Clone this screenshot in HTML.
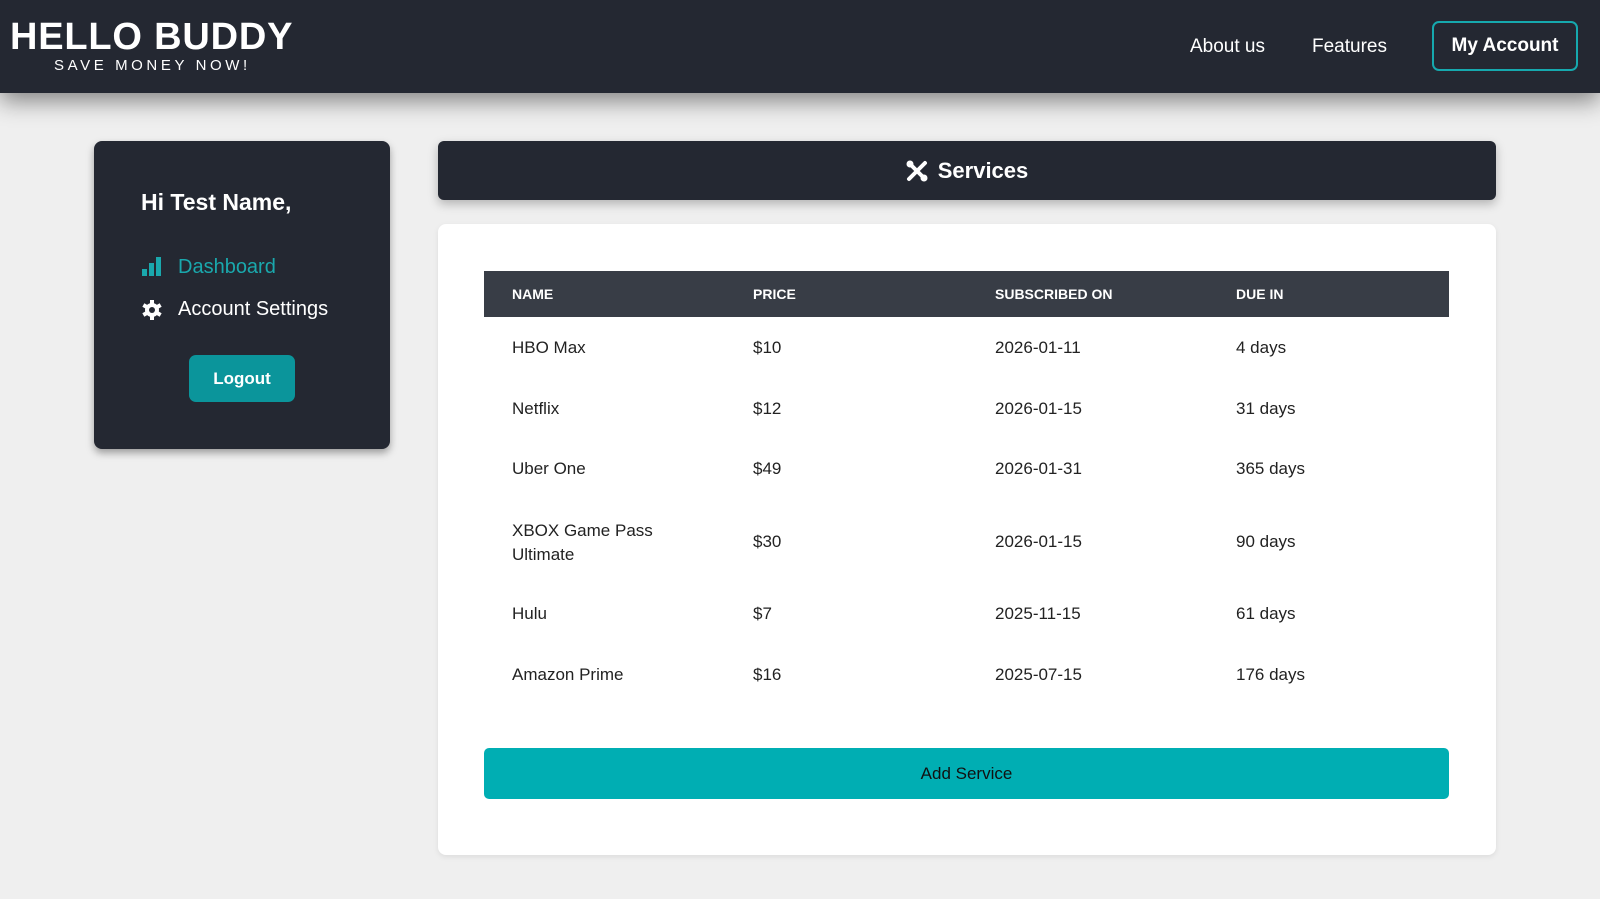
<!DOCTYPE html>
<html><head><meta charset="utf-8"><style>
*{box-sizing:border-box;margin:0;padding:0}
body{width:1600px;height:899px;overflow:hidden;background:#efefef;font-family:"Liberation Sans",sans-serif;position:relative}
.hdr{position:absolute;left:0;top:0;width:1600px;height:93px;background:#242832;box-shadow:0 8px 22px rgba(0,0,0,.45)}
.logo{position:absolute;left:10px;top:15px;color:#fff;font-weight:bold;font-size:38px;letter-spacing:0.8px;line-height:44px}
.tag{position:absolute;left:54px;top:57px;color:#fff;font-size:15px;letter-spacing:3.6px}
.nav{position:absolute;top:36px;color:#fff;font-size:19px}
.acct{position:absolute;left:1432px;top:21px;width:146px;height:50px;border:2px solid #16a9ae;border-radius:7px;color:#fff;font-weight:bold;font-size:19px;text-align:center;line-height:46px}
.side{position:absolute;left:94px;top:141px;width:296px;height:308px;background:#242832;border-radius:8px;box-shadow:0 4px 8px rgba(0,0,0,.35);color:#fff}
.side h2{position:absolute;left:47px;top:48px;font-size:23px;font-weight:bold}
.side .it{position:absolute;left:84px;font-size:20px}
.logout{position:absolute;left:95px;top:214px;width:106px;height:47px;background:#0b959b;border-radius:7px;text-align:center;line-height:47px;font-size:17px;font-weight:bold}
.sh{position:absolute;left:438px;top:141px;width:1058px;height:59px;background:#242832;border-radius:6px;box-shadow:0 4px 10px rgba(0,0,0,.25);color:#fff;font-size:22px;font-weight:bold;text-align:center;line-height:59px}
.card{position:absolute;left:438px;top:224px;width:1058px;height:631px;background:#fff;border-radius:8px;box-shadow:0 2px 6px rgba(0,0,0,.08)}
.th{position:absolute;left:46px;top:47px;width:965px;height:46px;background:#383d46;color:#fff;font-size:14px;font-weight:bold}
.th span,.r span{position:absolute}
.th span{top:15px}
.r{position:absolute;left:46px;width:965px;font-size:17px;color:#222}
.add{position:absolute;left:46px;top:524px;width:965px;height:51px;background:#00aeb3;border-radius:5px;text-align:center;line-height:51px;font-size:17px;color:#111}
</style></head><body>
<div class="hdr">
<div class="logo">HELLO BUDDY</div>
<div class="tag">SAVE MONEY NOW!</div>
<div class="nav" style="left:1190px">About us</div>
<div class="nav" style="left:1312px">Features</div>
<div class="acct">My Account</div>
</div>
<div class="side">
<h2>Hi Test Name,</h2>
<svg style="position:absolute;left:48px;top:116px" width="20" height="19"><rect x="0" y="12" width="5" height="7" fill="#1aa8ad"/><rect x="7" y="6" width="5" height="13" fill="#1aa8ad"/><rect x="14" y="0" width="5" height="19" fill="#1aa8ad"/></svg>
<div class="it" style="top:115px;color:#1aa8ad">Dashboard</div>
<svg style="position:absolute;left:48px;top:159px" width="20" height="20" viewBox="0 0 20 20"><circle cx="10" cy="10" r="7" fill="#fff"/><g fill="#fff"><rect x="8" y="0" width="4" height="20"/><rect x="8" y="0" width="4" height="20" transform="rotate(60 10 10)"/><rect x="8" y="0" width="4" height="20" transform="rotate(120 10 10)"/></g><circle cx="10" cy="10" r="3" fill="#242832"/></svg>
<div class="it" style="top:157px">Account Settings</div>
<div class="logout">Logout</div>
</div>
<div class="sh"><svg style="vertical-align:-4px;margin-right:10px" width="22" height="22" viewBox="0 0 22 22"><path d="M3 3l16 16M19 3L3 19" stroke="#fff" stroke-width="4" stroke-linecap="round"/><circle cx="4" cy="4" r="3.5" fill="#fff"/><circle cx="18" cy="18" r="3.5" fill="#fff"/></svg>Services</div>
<div class="card">
<div class="th"><span style="left:28px">NAME</span><span style="left:269px">PRICE</span><span style="left:511px">SUBSCRIBED ON</span><span style="left:752px">DUE IN</span></div>
<div class="r" style="top:114px"><span style="left:28px">HBO Max</span><span style="left:269px">$10</span><span style="left:511px">2026-01-11</span><span style="left:752px">4 days</span></div>
<div class="r" style="top:175px"><span style="left:28px">Netflix</span><span style="left:269px">$12</span><span style="left:511px">2026-01-15</span><span style="left:752px">31 days</span></div>
<div class="r" style="top:235px"><span style="left:28px">Uber One</span><span style="left:269px">$49</span><span style="left:511px">2026-01-31</span><span style="left:752px">365 days</span></div>
<div class="r" style="top:295px"><span style="left:28px;line-height:24px">XBOX Game Pass<br>Ultimate</span><span style="left:269px;top:13px">$30</span><span style="left:511px;top:13px">2026-01-15</span><span style="left:752px;top:13px">90 days</span></div>
<div class="r" style="top:380px"><span style="left:28px">Hulu</span><span style="left:269px">$7</span><span style="left:511px">2025-11-15</span><span style="left:752px">61 days</span></div>
<div class="r" style="top:441px"><span style="left:28px">Amazon Prime</span><span style="left:269px">$16</span><span style="left:511px">2025-07-15</span><span style="left:752px">176 days</span></div>
<div class="add">Add Service</div>
</div>
</body></html>
